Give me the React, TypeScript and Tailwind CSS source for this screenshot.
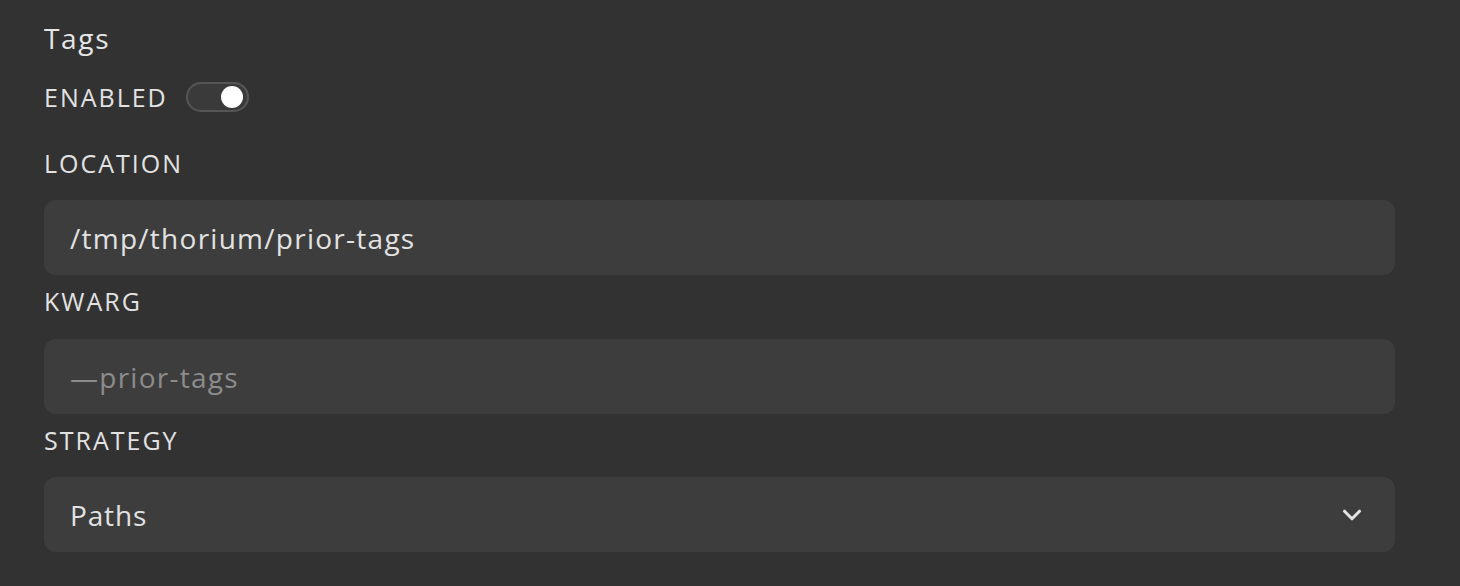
import { ChevronDown } from 'lucide-react';

function Label({ children }: { children: React.ReactNode }) {
  return (
    <div className="text-[25px] leading-[30px] font-medium text-[#e2e2e2] tracking-[0.08em]">{children}</div>
  );
}

export default function App() {
  return (
    <div
      className="min-h-[586px] w-full bg-[#323232] pl-[44px] pr-[65px] pt-[22px]"
      style={{ fontFamily: '"Open Sans", "Liberation Sans", sans-serif' }}
    >
      <div className="text-[28px] leading-[32px] font-medium tracking-[0.06em] text-[#e6e6e6]">Tags</div>

      {/* Enabled toggle */}
      <div className="mt-[28px] flex h-[30px] items-center gap-[18px]">
        <Label>ENABLED</Label>
        <button className="relative h-[30px] w-[63px] rounded-full border-2 border-[#565656] bg-[#3a3a3a]">
          <span className="absolute right-[4px] top-1/2 h-[22px] w-[22px] -translate-y-1/2 rounded-full bg-white" />
        </button>
      </div>

      <div className="mt-[36px]">
        <Label>LOCATION</Label>
      </div>
      <div className="mt-[22px] flex h-[75px] items-center rounded-[12px] bg-[#3d3d3d] px-[26px] text-[28px] font-medium tracking-[0.045em] text-[#e2e2e2]">
        /tmp/thorium/prior-tags
      </div>

      <div className="mt-[11px]">
        <Label>KWARG</Label>
      </div>
      <div className="mt-[23px] flex h-[75px] items-center rounded-[12px] bg-[#3d3d3d] px-[26px] text-[28px] font-medium tracking-[0.045em] text-[#8c8c8c]">
        —prior-tags
      </div>

      <div className="mt-[11px]">
        <Label>STRATEGY</Label>
      </div>
      <div className="mt-[22px] flex h-[75px] items-center justify-between rounded-[12px] bg-[#3d3d3d] pl-[26px] pr-[28px] text-[28px] font-medium tracking-[0.03em] text-[#e2e2e2]">
        <span>Paths</span>
        <ChevronDown size={30} strokeWidth={2.5} className="text-[#e2e2e2]" />
      </div>
    </div>
  );
}
